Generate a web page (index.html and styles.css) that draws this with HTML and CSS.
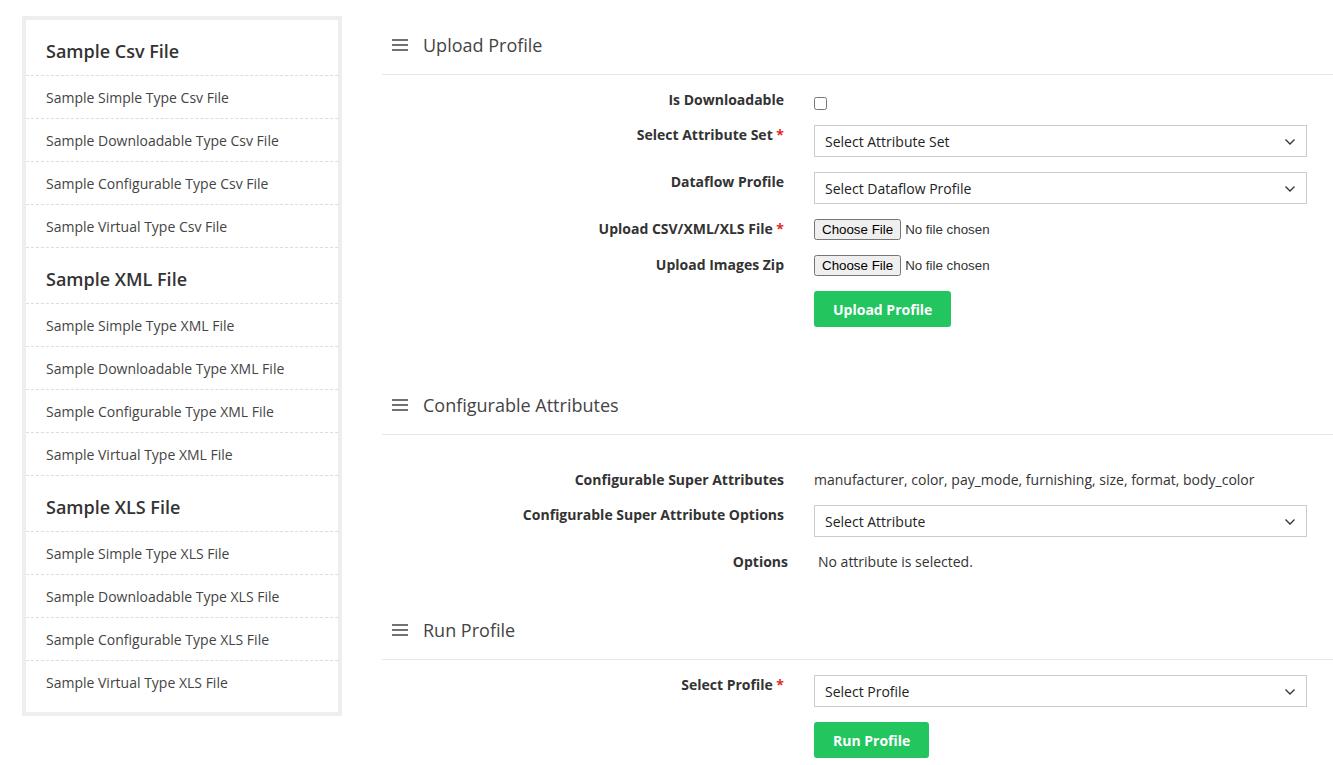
FILE: index.html
```html
<!DOCTYPE html>
<html lang="en">
<head>
  <meta charset="UTF-8">
  <meta name="viewport" content="width=device-width, initial-scale=1.0">
  <title>Dataflow Profile</title>
  <link rel="stylesheet" href="styles.css">
</head>
<body>
  <div class="page">
    <aside class="samples">
      <h3 class="samples-title">Sample Csv File</h3>
      <a class="sample-link" href="#">Sample Simple Type Csv File</a>
      <a class="sample-link" href="#">Sample Downloadable Type Csv File</a>
      <a class="sample-link" href="#">Sample Configurable Type Csv File</a>
      <a class="sample-link" href="#">Sample Virtual Type Csv File</a>

      <h3 class="samples-title">Sample XML File</h3>
      <a class="sample-link" href="#">Sample Simple Type XML File</a>
      <a class="sample-link" href="#">Sample Downloadable Type XML File</a>
      <a class="sample-link" href="#">Sample Configurable Type XML File</a>
      <a class="sample-link" href="#">Sample Virtual Type XML File</a>

      <h3 class="samples-title">Sample XLS File</h3>
      <a class="sample-link" href="#">Sample Simple Type XLS File</a>
      <a class="sample-link" href="#">Sample Downloadable Type XLS File</a>
      <a class="sample-link" href="#">Sample Configurable Type XLS File</a>
      <a class="sample-link last" href="#">Sample Virtual Type XLS File</a>
    </aside>

    <main class="content">
      <section class="panel">
        <div class="panel-head">
          <svg class="menu-icon" width="16" height="14" viewBox="0 0 16 14"><path d="M0 2h16M0 7h16M0 12h16" stroke="#444" stroke-width="1.6"/></svg>
          <span>Upload Profile</span>
        </div>
        <div class="form">
          <label class="form-label">Is Downloadable</label>
          <div class="form-field"><input type="checkbox" class="check"></div>

          <label class="form-label">Select Attribute Set <em>*</em></label>
          <div class="select-wrap">
            <select class="select"><option>Select Attribute Set</option></select>
            <svg class="chevron" width="10" height="6" viewBox="0 0 10 6"><path d="M0.5 0.5L5 5L9.5 0.5" fill="none" stroke="#333" stroke-width="1.3"/></svg>
          </div>

          <label class="form-label">Dataflow Profile</label>
          <div class="select-wrap">
            <select class="select"><option>Select Dataflow Profile</option></select>
            <svg class="chevron" width="10" height="6" viewBox="0 0 10 6"><path d="M0.5 0.5L5 5L9.5 0.5" fill="none" stroke="#333" stroke-width="1.3"/></svg>
          </div>

          <label class="form-label">Upload CSV/XML/XLS File <em>*</em></label>
          <div class="form-field"><input type="file" class="file"></div>

          <label class="form-label">Upload Images Zip</label>
          <div class="form-field"><input type="file" class="file"></div>

          <div></div>
          <div class="form-field"><button class="btn">Upload Profile</button></div>
        </div>
      </section>

      <section class="panel">
        <div class="panel-head">
          <svg class="menu-icon" width="16" height="14" viewBox="0 0 16 14"><path d="M0 2h16M0 7h16M0 12h16" stroke="#444" stroke-width="1.6"/></svg>
          <span>Configurable Attributes</span>
        </div>
        <div class="form form-wide">
          <label class="form-label">Configurable Super Attributes</label>
          <div class="form-text">manufacturer, color, pay_mode, furnishing, size, format, body_color</div>

          <label class="form-label">Configurable Super Attribute Options</label>
          <div class="select-wrap">
            <select class="select"><option>Select Attribute</option></select>
            <svg class="chevron" width="10" height="6" viewBox="0 0 10 6"><path d="M0.5 0.5L5 5L9.5 0.5" fill="none" stroke="#333" stroke-width="1.3"/></svg>
          </div>

          <label class="form-label shifted">Options</label>
          <div class="form-text shifted">No attribute is selected.</div>
        </div>
      </section>

      <section class="panel">
        <div class="panel-head">
          <svg class="menu-icon" width="16" height="14" viewBox="0 0 16 14"><path d="M0 2h16M0 7h16M0 12h16" stroke="#444" stroke-width="1.6"/></svg>
          <span>Run Profile</span>
        </div>
        <div class="form">
          <label class="form-label">Select Profile <em>*</em></label>
          <div class="select-wrap">
            <select class="select"><option>Select Profile</option></select>
            <svg class="chevron" width="10" height="6" viewBox="0 0 10 6"><path d="M0.5 0.5L5 5L9.5 0.5" fill="none" stroke="#333" stroke-width="1.3"/></svg>
          </div>

          <div></div>
          <div class="form-field"><button class="btn">Run Profile</button></div>
        </div>
      </section>
    </main>
  </div>
</body>
</html>
```

FILE: styles.css
```css
body {
  margin: 0;
  font-family: "Open Sans", Arial, sans-serif;
  font-size: 14px;
  color: #333;
  background-color: #fff;
}

.page {
  display: flex;
  align-items: flex-start;
  padding: 16px 0 0 22px;
}

.samples {
  width: 312px;
  flex: none;
  border: 4px solid #eee;
  padding-bottom: 9px;
  display: flex;
  flex-direction: column;
}

.samples-title {
  margin: 0;
  padding: 19px 20px 12px;
  font-size: 18px;
  line-height: 24px;
  font-weight: 600;
  color: #333;
  border-bottom: 1px dashed #ddd;
}

.sample-link {
  display: block;
  padding: 12px 20px 10px;
  line-height: 20px;
  color: #444;
  text-decoration: none;
  border-bottom: 1px dashed #ddd;
}

.sample-link.last {
  border-bottom: none;
}

.content {
  flex: 1;
  margin-left: 40px;
}

.panel {
  margin-bottom: 49px;
}

.panel:nth-child(2) {
  margin-bottom: 29px;
}

.panel:last-child {
  margin-bottom: 0;
}

.panel-head {
  display: flex;
  align-items: center;
  gap: 15px;
  padding: 17px 10px;
  font-size: 18px;
  line-height: 24px;
  color: #444;
  border-bottom: 1px solid #e8e8e8;
}

.menu-icon {
  flex: none;
}

.form {
  display: grid;
  grid-template-columns: 402px 1fr;
  column-gap: 30px;
  row-gap: 15px;
  padding: 15px 26px 0 0;
}

.form-wide {
  padding-top: 35px;
}

.form-label {
  text-align: right;
  font-weight: 700;
  line-height: 20px;
  color: #333;
}

.form-label em {
  font-style: normal;
  color: #e02b27;
}

.form-label.shifted {
  margin-right: -4px;
}

.form-field {
  display: flex;
  align-items: center;
  min-height: 20px;
}

.form-text {
  line-height: 20px;
  color: #333;
}

.form-text.shifted {
  padding-left: 4px;
}

.check {
  margin: 6px 0 0 0;
  width: 13px;
  height: 13px;
}

.select-wrap {
  position: relative;
}

.select {
  display: block;
  width: 100%;
  height: 32px;
  padding: 0 30px 0 10px;
  font-family: "Open Sans", Arial, sans-serif;
  font-size: 14px;
  color: #222;
  background-color: #fff;
  border: 1px solid #ccc;
  border-radius: 0;
  appearance: none;
  -webkit-appearance: none;
}

.chevron {
  position: absolute;
  right: 12px;
  top: 14px;
  pointer-events: none;
}

.file {
  margin: 0;
}

.btn {
  height: 36px;
  padding: 0 19px;
  font-family: "Open Sans", Arial, sans-serif;
  font-size: 14px;
  font-weight: 700;
  color: #fff;
  background-color: #22c55e;
  border: none;
  border-radius: 3px;
  cursor: pointer;
}
```
